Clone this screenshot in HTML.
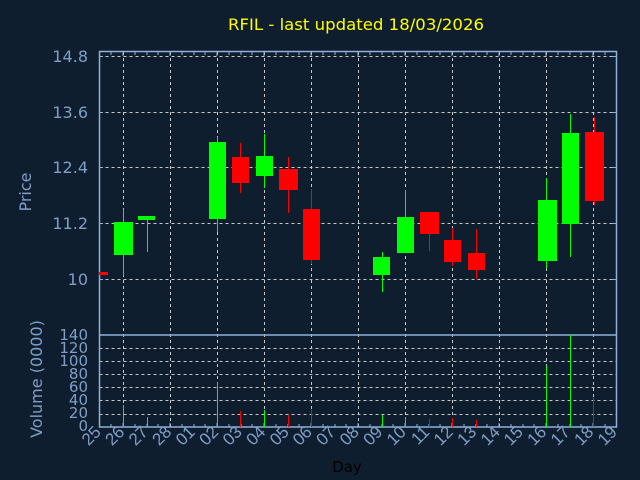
<!DOCTYPE html>
<html><head><meta charset="utf-8"><style>
html,body{margin:0;padding:0;background:#0f1e2f;}
svg{display:block}
text{font-family:"DejaVu Sans","Liberation Sans",sans-serif;}
.lx text{font-family:"Liberation Sans",sans-serif;}
</style></head><body>
<svg width="640" height="480" viewBox="0 0 640 480" xmlns="http://www.w3.org/2000/svg">
<rect width="640" height="480" fill="#0f1e2f"/>
<text x="356" y="30" fill="#ffff00" font-size="16" text-anchor="middle" textLength="256" lengthAdjust="spacingAndGlyphs">RFIL - last updated 18/03/2026</text>
<g stroke="#c8c8c8" stroke-width="1" stroke-dasharray="3,3" fill="none">
<path d="M99.5 56.5H616M99.5 112.5H616M99.5 167.5H616M99.5 223.5H616M99.5 279.5H616"/>
<path d="M99.5 348.5H616M99.5 361.5H616M99.5 374.5H616M99.5 387.5H616M99.5 400.5H616M99.5 414.5H616"/>
<path d="M123.5 52V427M170.5 52V427M217.5 52V427M264.5 52V427M311.5 52V427M358.5 52V427M405.5 52V427M452.5 52V427M499.5 52V427M546.5 52V427M593.5 52V427"/>
</g>
<g stroke="#8fb0d8" stroke-width="1.5" fill="none">
<rect x="99.5" y="51.5" width="517" height="375.5"/>
<path d="M99.5 335H616.5"/>
</g>
<g stroke="#8fb0d8" stroke-width="1">
<path d="M111 52v3M123 52v4M135 52v3M147 52v3M158 52v3M170 52v4M182 52v3M194 52v3M205 52v3M217 52v4M229 52v3M241 52v3M252 52v3M264 52v4M276 52v3M288 52v3M299 52v3M311 52v4M323 52v3M335 52v3M346 52v3M358 52v4M370 52v3M382 52v3M393 52v3M405 52v4M417 52v3M429 52v3M440 52v3M452 52v4M464 52v3M476 52v3M487 52v3M499 52v4M511 52v3M523 52v3M534 52v3M546 52v4M558 52v3M570 52v3M581 52v3M593 52v4M605 52v3"/>
<path d="M111 427v-3M123 427v-4M135 427v-3M147 427v-3M158 427v-3M170 427v-4M182 427v-3M194 427v-3M205 427v-3M217 427v-4M229 427v-3M241 427v-3M252 427v-3M264 427v-4M276 427v-3M288 427v-3M299 427v-3M311 427v-4M323 427v-3M335 427v-3M346 427v-3M358 427v-4M370 427v-3M382 427v-3M393 427v-3M405 427v-4M417 427v-3M429 427v-3M440 427v-3M452 427v-4M464 427v-3M476 427v-3M487 427v-3M499 427v-4M511 427v-3M523 427v-3M534 427v-3M546 427v-4M558 427v-3M570 427v-3M581 427v-3M593 427v-4M605 427v-3"/>
<path d="M99 56.5h4M99 112.5h4M99 167.5h4M99 223.5h4M99 279.5h4M616 56.5h-4M616 112.5h-4M616 167.5h-4M616 223.5h-4M616 279.5h-4"/>
</g>
<g fill="#7f9fc8" font-size="16" text-anchor="end">
<text x="88" y="62">14.8</text>
<text x="88" y="118">13.6</text>
<text x="88" y="173">12.4</text>
<text x="88" y="229">11.2</text>
<text x="88" y="285">10</text>
</g>
<g fill="#7f9fc8" font-size="15" text-anchor="end">
<text x="88" y="340">140</text>
<text x="88" y="353">120</text>
<text x="88" y="366">100</text>
<text x="88" y="379">80</text>
<text x="88" y="392">60</text>
<text x="88" y="405">40</text>
<text x="88" y="418">20</text>
<text x="88" y="431">0</text>
</g>
<text transform="translate(31,192) rotate(-90)" fill="#7f9fc8" font-size="16" text-anchor="middle">Price</text>
<text transform="translate(42,379) rotate(-90)" fill="#7f9fc8" font-size="16" text-anchor="middle">Volume (0000)</text>
<text x="347" y="472" fill="#000" font-size="15" text-anchor="middle">Day</text>
<g class="lx" fill="#7f9fc8" font-size="17" text-anchor="end">
<text transform="translate(102,433) rotate(-45)">25</text>
<text transform="translate(125.5,433) rotate(-45)">26</text>
<text transform="translate(149,433) rotate(-45)">27</text>
<text transform="translate(172.5,433) rotate(-45)">28</text>
<text transform="translate(196,433) rotate(-45)">01</text>
<text transform="translate(219.5,433) rotate(-45)">02</text>
<text transform="translate(243,433) rotate(-45)">03</text>
<text transform="translate(266.5,433) rotate(-45)">04</text>
<text transform="translate(290,433) rotate(-45)">05</text>
<text transform="translate(313,433) rotate(-45)">06</text>
<text transform="translate(336.5,433) rotate(-45)">07</text>
<text transform="translate(360,433) rotate(-45)">08</text>
<text transform="translate(383.5,433) rotate(-45)">09</text>
<text transform="translate(407,433) rotate(-45)">10</text>
<text transform="translate(430.5,433) rotate(-45)">11</text>
<text transform="translate(454,433) rotate(-45)">12</text>
<text transform="translate(477.5,433) rotate(-45)">13</text>
<text transform="translate(501,433) rotate(-45)">14</text>
<text transform="translate(524,433) rotate(-45)">15</text>
<text transform="translate(547.5,433) rotate(-45)">16</text>
<text transform="translate(571,433) rotate(-45)">17</text>
<text transform="translate(594.5,433) rotate(-45)">18</text>
<text transform="translate(618,433) rotate(-45)">19</text>
</g>
<g fill="#00ff00" stroke="#00ff00" stroke-width="1">
<path d="M123.5 209V276M147.5 218V252M217.5 137V232M264.5 134V188M382.5 252V292M405.5 190V253M546.5 178V268M570.5 114V257" fill="none"/>
<rect x="114" y="222" width="19" height="33" stroke="none"/>
<rect x="138" y="216" width="17" height="4" stroke="none"/>
<rect x="209" y="142" width="17" height="77" stroke="none"/>
<rect x="256" y="156" width="17" height="20" stroke="none"/>
<rect x="373" y="257" width="17" height="18" stroke="none"/>
<rect x="397" y="217" width="17" height="36" stroke="none"/>
<rect x="538" y="200" width="19" height="61" stroke="none"/>
<rect x="562" y="133" width="17" height="91" stroke="none"/>
</g>
<g fill="#ff0000" stroke="#ff0000" stroke-width="1">
<path d="M240.5 143V193M288.5 157V213M311.5 189V264M429.5 212V251M452.5 228V266M476.5 229V279M594.5 117V205" fill="none"/>
<rect x="99" y="272" width="9" height="3" stroke="none"/>
<rect x="232" y="157" width="17" height="26" stroke="none"/>
<rect x="279" y="169" width="19" height="21" stroke="none"/>
<rect x="303" y="209" width="17" height="51" stroke="none"/>
<rect x="420" y="212" width="19" height="22" stroke="none"/>
<rect x="444" y="240" width="17" height="22" stroke="none"/>
<rect x="468" y="253" width="17" height="17" stroke="none"/>
<rect x="585" y="132" width="19" height="69" stroke="none"/>
</g>
<g stroke="#00ff00" stroke-width="1">
<path d="M123.5 427V405M147.5 427V417M217.5 427V382M264.5 427V410M382.5 427V415M405.5 427V417M546.5 427V366M570.5 427V335"/>
</g>
<g stroke="#ff0000" stroke-width="1">
<path d="M240.5 427V411M288.5 427V415M311.5 427V410M429.5 427V419M452.5 427V418M476.5 427V420M593.5 427V397"/>
</g>
</svg>
</body></html>
